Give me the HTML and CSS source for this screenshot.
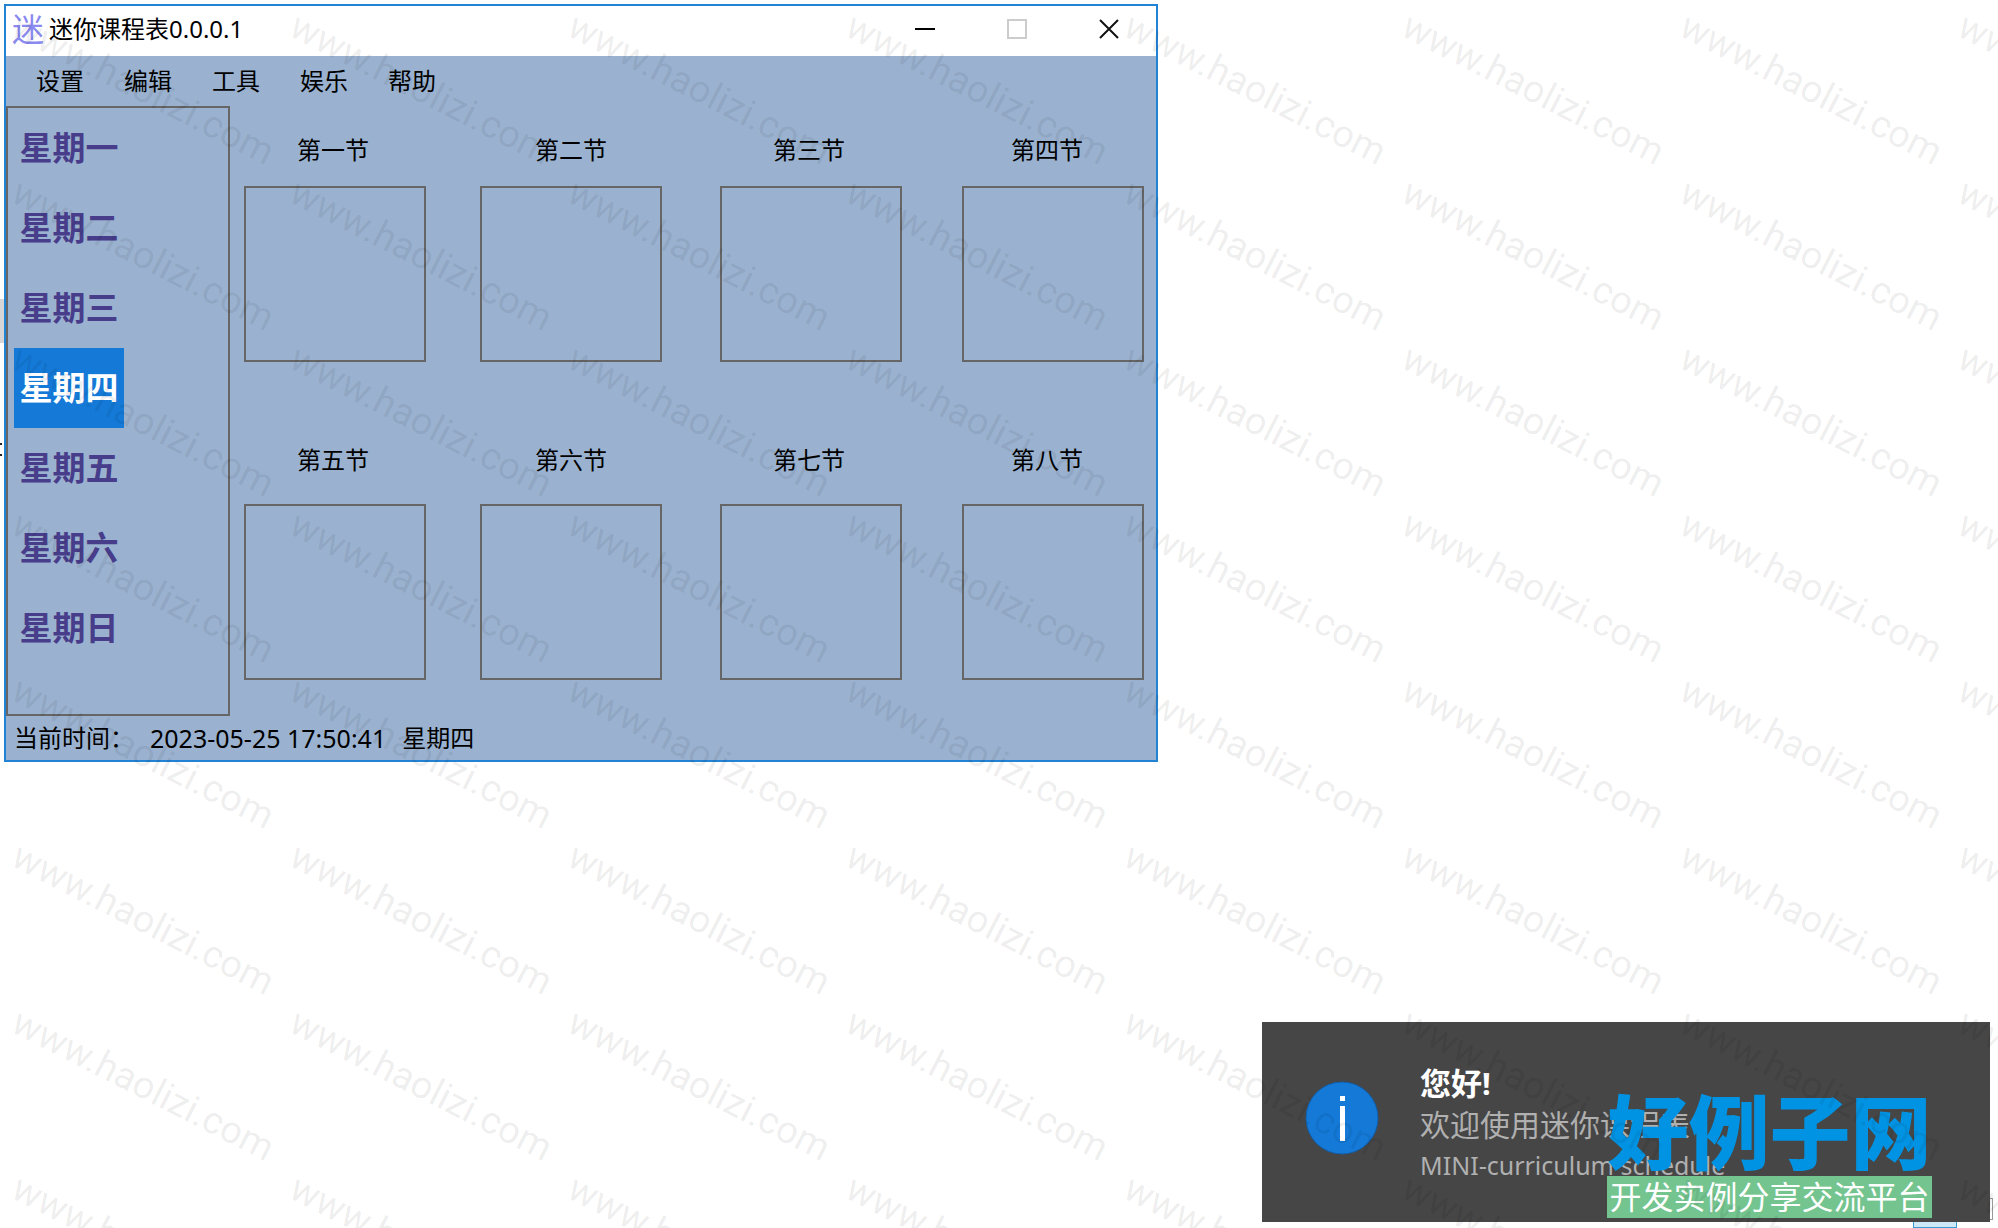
FILE: index.html
```html
<!DOCTYPE html>
<html lang="zh-CN">
<head>
    <meta charset="UTF-8">
    <meta name="viewport" content="width=device-width, initial-scale=1.0">
    <title>迷你课程表0.0.0.1</title>
    <link rel="stylesheet" href="styles.css">
</head>
<body>
    <div class="edge-block"></div>
    <div class="edge-marks"></div>

    <main class="window">
        <header class="title-bar">
            <span class="app-icon" aria-hidden="true">迷</span>
            <h1>迷你课程表0.0.0.1</h1>
            <div class="window-buttons">
                <button type="button" aria-label="最小化">
                    <svg width="20" height="20" viewBox="0 0 20 20"><path d="M0 10h20" stroke="#000" stroke-width="2"/></svg>
                </button>
                <button type="button" aria-label="最大化" disabled>
                    <svg width="20" height="20" viewBox="0 0 20 20"><rect x="1" y="1" width="18" height="18" fill="none" stroke="#ccc" stroke-width="2"/></svg>
                </button>
                <button type="button" aria-label="关闭">
                    <svg width="20" height="20" viewBox="0 0 20 20"><path d="M1 1l18 18M19 1L1 19" stroke="#111" stroke-width="2"/></svg>
                </button>
            </div>
        </header>

        <nav class="menu">
            <button type="button">设置</button>
            <button type="button">编辑</button>
            <button type="button">工具</button>
            <button type="button">娱乐</button>
            <button type="button">帮助</button>
        </nav>

        <div class="content">
            <div class="days">
                <button type="button">星期一</button>
                <button type="button">星期二</button>
                <button type="button">星期三</button>
                <button type="button" class="active">星期四</button>
                <button type="button">星期五</button>
                <button type="button">星期六</button>
                <button type="button">星期日</button>
            </div>

            <div class="lessons">
                <div class="names">
                    <span>第一节</span>
                    <span>第二节</span>
                    <span>第三节</span>
                    <span>第四节</span>
                </div>
                <div class="slots">
                    <div class="slot"></div>
                    <div class="slot"></div>
                    <div class="slot"></div>
                    <div class="slot"></div>
                </div>
                <div class="names">
                    <span>第五节</span>
                    <span>第六节</span>
                    <span>第七节</span>
                    <span>第八节</span>
                </div>
                <div class="slots">
                    <div class="slot"></div>
                    <div class="slot"></div>
                    <div class="slot"></div>
                    <div class="slot"></div>
                </div>
            </div>
        </div>

        <footer class="status">
            <span class="status-label">当前时间：</span>
            <span class="status-time">2023-05-25 17:50:41</span>
            <span>星期四</span>
        </footer>
    </main>

    <div class="tray-item"></div>
    <div class="taskbar-item"></div>

    <aside class="toast" role="status">
        <svg class="info-icon" width="74" height="74" viewBox="0 0 74 74">
            <circle cx="37" cy="37" r="36" fill="#1479d7" stroke="#0f5fae"/>
            <rect x="35" y="15" width="5" height="5" fill="#fff"/>
            <rect x="35" y="25" width="5" height="35" fill="#fff"/>
        </svg>
        <div class="toast-text">
            <strong>您好!</strong>
            <p>欢迎使用迷你课程表</p>
            <small>MINI-curriculum schedule</small>
        </div>
    </aside>

    <div class="brand">
        <span class="brand-name">好例子网</span>
        <span class="brand-line">开发实例分享交流平台</span>
    </div>

    <div class="watermark" aria-hidden="true"></div>
    <script src="watermark.js"></script>
</body>
</html>
```
FILE: styles.css
```css
:root {
    --window-bg: #9ab2cf;
    --window-border: #2282d3;
    --line: #666;
    --accent: #1479d7;
    --day-color: #483d8b;
    --toast-bg: #464646;
}

* {
    box-sizing: border-box;
}

body {
    position: relative;
    min-height: 100vh;
    margin: 0;
    padding: 4px;
    overflow: hidden;
    background: #fff;
    color: #000;
    font-family: "Noto Sans", "Noto Sans CJK SC", sans-serif;
    font-size: 24px;
    line-height: 32px;
}

button {
    padding: 0;
    border: none;
    background: none;
    color: inherit;
    font: inherit;
}

/* main window */
.window {
    position: relative;
    width: calc(100vw - 844px);
    min-width: 1154px;
    border: 2px solid var(--window-border);
    background: var(--window-bg);
}

.title-bar {
    display: flex;
    align-items: center;
    height: 50px;
    padding: 0 1px 4px 6px;
    background: #fff;
}

.app-icon {
    width: 32px;
    color: #8a8af0;
    font-size: 32px;
}

.title-bar h1 {
    flex: 1;
    margin: 0 0 0 5px;
    font-size: 24px;
    font-weight: normal;
}

.window-buttons {
    display: flex;
}

.window-buttons button {
    display: grid;
    place-items: center;
    width: 92px;
    height: 46px;
}

.menu {
    display: flex;
    gap: 40px;
    height: 50px;
    padding-left: 30px;
}

.content {
    display: flex;
}

.days {
    width: 224px;
    height: 610px;
    padding-left: 6px;
    border: 2px solid var(--line);
}

.days button {
    display: block;
    width: 110px;
    height: 80px;
    color: var(--day-color);
    font-size: 33px;
    font-weight: bold;
}

.days .active {
    background: var(--accent);
    color: #fff;
}

.lessons {
    flex: 1;
    padding: 28px 0 0 14px;
}

.names {
    display: grid;
    grid-template-columns: 238fr 238fr 238fr 145fr;
    padding-left: 53px;
}

.slots {
    display: grid;
    grid-template-columns: 236fr 240fr 242fr 194fr;
    margin: 20px 0 82px;
}

.slot {
    width: 182px;
    height: 176px;
    border: 2px solid var(--line);
}

.slots:last-child {
    margin-top: 28px;
    margin-bottom: 0;
}

.status {
    display: flex;
    align-items: center;
    height: 44px;
    padding-left: 8px;
}

.status-label {
    width: 136px;
}

.status-time {
    margin-right: 16px;
    font-size: 25px;
}

/* parts of the desktop behind the windows */
.edge-block {
    position: absolute;
    top: 299px;
    left: 0;
    width: 4px;
    height: 44px;
    background: #d6d6d6;
}

.edge-marks {
    position: absolute;
    top: 443px;
    left: 0;
    width: 2px;
    height: 13px;
    border: solid #222;
    border-width: 2px 0;
}

.tray-item {
    position: absolute;
    right: 5px;
    bottom: 8px;
    width: 16px;
    height: 22px;
    border: 1px solid #999;
    background: #6a9ae8;
    box-shadow: inset 0 0 0 2px #fff;
}

.taskbar-item {
    position: absolute;
    right: 41px;
    bottom: 0;
    width: 44px;
    height: 10px;
    border: 1px solid #3b9ad2;
    background: #cde8f7;
}

/* notification */
.toast {
    position: absolute;
    right: 8px;
    bottom: 6px;
    display: flex;
    width: 728px;
    height: 200px;
    padding: 41px 43px;
    background: var(--toast-bg);
    color: #b0b0b0;
}

.info-icon {
    margin: 18px 41px 0 0;
}

.toast-text {
    font-size: 30px;
    line-height: 41px;
}

.toast-text strong {
    display: block;
    color: #fff;
    font-size: 31px;
}

.toast-text p {
    margin: 0;
}

.toast-text small {
    display: block;
    font-size: 25px;
    line-height: 40px;
}

.brand {
    position: absolute;
    right: 66px;
    bottom: 10px;
    width: 325px;
}

.brand span {
    display: block;
    text-align: center;
    white-space: nowrap;
}

.brand-name {
    color: #0093e3;
    font-size: 81px;
    font-weight: 900;
    line-height: 88px;
}

.brand-line {
    height: 42px;
    background: #73c48f;
    color: #fff;
    font-size: 32px;
    line-height: 42px;
}

/* repeated site address over the whole page */
.watermark {
    position: absolute;
    inset: 0;
    display: grid;
    grid-template-columns: repeat(8, 278px);
    grid-auto-rows: 166px;
    padding: 0 0 0 10px;
    overflow: hidden;
    color: rgba(0, 0, 0, 0.08);
    font-family: Roboto, sans-serif;
    font-size: 38px;
    line-height: 44px;
    pointer-events: none;
}

.watermark span {
    white-space: nowrap;
    transform: rotate(27deg);
    transform-origin: 0 33px;
}
```
FILE: watermark.js
```js
const watermark = document.querySelector('.watermark');

for (let i = 0; i < 64; i++) {
    const mark = document.createElement('span');
    mark.textContent = 'www.haolizi.com';
    watermark.appendChild(mark);
}
```
